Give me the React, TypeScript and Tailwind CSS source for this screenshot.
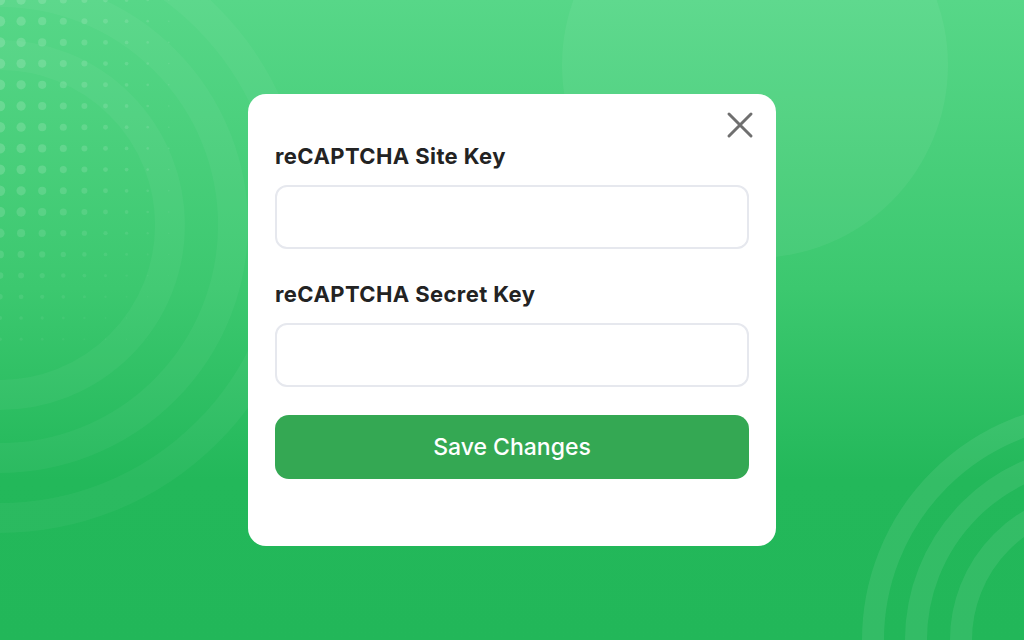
import React from "react";

// Dot grid in the top-left corner: dots shrink to the right and fade downwards.
const dots: { x: number; y: number; r: number; o: number }[] = [];
for (let c = 0; c < 9; c++) {
  for (let row = 0; row < 17; row++) {
    const x = c * 21.1;
    const y = row * 21.2;
    const r = Math.max(0.6, 5.2 - c * 0.55) * (row > 10 ? Math.max(0.35, 1 - (row - 10) * 0.12) : 1);
    const o = 0.16 - c * 0.008 - (row > 8 ? (row - 8) * 0.012 : 0);
    dots.push({ x, y, r, o: Math.max(0.04, o) });
  }
}

function Backdrop() {
  return (
    <svg
      className="absolute inset-0 h-full w-full"
      viewBox="0 0 1024 640"
      preserveAspectRatio="none"
    >
      <defs>
        <linearGradient id="bg" x1="0" y1="0" x2="0" y2="1">
          <stop offset="0" stopColor="#57d788" />
          <stop offset="0.45" stopColor="#3cc86f" />
          <stop offset="0.75" stopColor="#23b85a" />
          <stop offset="1" stopColor="#22b759" />
        </linearGradient>
      </defs>
      <rect width="1024" height="640" fill="url(#bg)" />

      {/* soft circle top right */}
      <circle cx="755" cy="65" r="193" fill="#ffffff" fillOpacity="0.05" />

      {/* rings on the left */}
      {[170, 233, 293].map((r) => (
        <circle
          key={r}
          cx="0"
          cy="225"
          r={r}
          fill="none"
          stroke="#ffffff"
          strokeOpacity="0.04"
          strokeWidth="30"
        />
      ))}

      {dots.map((d, i) => (
        <circle key={i} cx={d.x} cy={d.y} r={d.r} fill="#ffffff" fillOpacity={d.o} />
      ))}

      {/* rings bottom right */}
      {[227, 184, 139].map((r) => (
        <circle
          key={r}
          cx="1100"
          cy="640"
          r={r}
          fill="none"
          stroke="#ffffff"
          strokeOpacity="0.08"
          strokeWidth="22"
        />
      ))}
    </svg>
  );
}

function Field({ label, className }: { label: string; className?: string }) {
  return (
    <div className={className}>
      <label className="block text-[22px] font-bold leading-7 tracking-[0.4px] text-[#232323]">
        {label}
      </label>
      <input
        type="text"
        className="mt-[15px] block h-16 w-full rounded-xl border-2 border-[#e6e8ee] bg-white px-4 text-lg outline-none"
      />
    </div>
  );
}

export default function App() {
  return (
    <div
      className="relative flex h-screen w-full items-center justify-center overflow-hidden"
      style={{ fontFamily: "Inter, 'Noto Sans', sans-serif" }}
    >
      <Backdrop />

      <div className="relative h-[452px] w-[528px] rounded-[18px] bg-white px-[27px] pt-12">
        <button
          type="button"
          className="absolute right-[20px] top-[15px] text-[#6f6f6f]"
          aria-label="Close"
        >
          <svg width="32" height="32" viewBox="0 0 32 32">
            <path
              d="M5 5 L27 27 M27 5 L5 27"
              stroke="currentColor"
              strokeWidth="3"
              strokeLinecap="round"
            />
          </svg>
        </button>

        <Field label="reCAPTCHA Site Key" />
        <Field label="reCAPTCHA Secret Key" className="mt-[31px]" />

        <button
          type="button"
          className="mt-7 flex h-16 w-full items-center justify-center rounded-[14px] bg-[#34a853] text-[23px] font-medium text-white"
        >
          Save Changes
        </button>
      </div>
    </div>
  );
}
